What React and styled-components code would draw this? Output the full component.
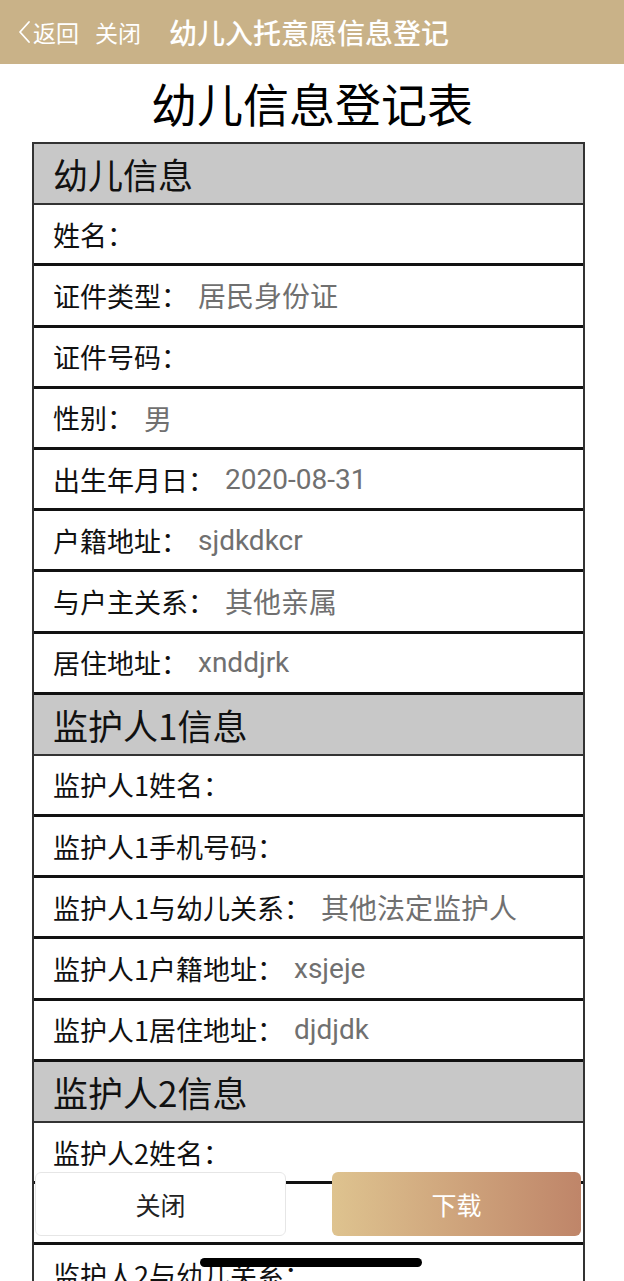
import React from "react";
import styled, { createGlobalStyle } from "styled-components";

const GlobalStyle = createGlobalStyle`
  body {
    margin: 0;
    background: #fff;
    font-family: "Noto Sans CJK SC", "Noto Sans", sans-serif;
    color: #111;
  }
`;

const NavBar = styled.div`
  height: 64px;
  background-color: #c9b288;
  display: flex;
  align-items: center;
  padding-left: 17px;
  color: #fff;
`;
const NavLink = styled.span`
  display: flex;
  align-items: center;
  font-size: 23px;
  margin-right: ${props => props.gap || 0}px;
`;
const NavTitle = styled.span`
  font-size: 28px;
  font-weight: 500;
`;

const PageTitle = styled.h1`
  margin: 0;
  height: 76px;
  padding-bottom: 2px;
  display: flex;
  align-items: center;
  justify-content: center;
  font-size: 46px;
  font-weight: 400;
  color: #000;
`;

const Table = styled.div`
  margin: 0 39px 0 32px;
  border-top: 2px solid #333;
  border-left: 2px solid #333;
  border-right: 2px solid #333;
  padding-bottom: 120px;
`;
const SectionHead = styled.div`
  box-sizing: border-box;
  height: 61.2px;
  background: #c8c8c8;
  border-bottom: 2px solid #333;
  display: flex;
  align-items: center;
  padding-left: 19px;
  font-size: 35px;
  color: #111;
`;
const Row = styled.div`
  box-sizing: border-box;
  height: 61.2px;
  border-bottom: 3px solid #111;
  display: flex;
  align-items: center;
  padding-left: 19px;
  font-size: 27px;
`;
const Label = styled.span`
  color: #111;
`;
const Value = styled.span`
  color: #707070;
  margin-left: 10px;
  font-family: Roboto, "Noto Sans CJK SC", sans-serif;
  font-size: 28px;
`;

const Footer = styled.div`
  position: fixed;
  left: 0;
  right: 0;
  bottom: 45px;
  display: flex;
  gap: 46px;
  padding: 0 43px 0 35px;
`;
const Button = styled.button`
  flex: 1;
  height: 64px;
  border-radius: 6px;
  font-family: inherit;
  font-size: 25px;
  border: ${props => (props.primary ? "none" : "1px solid #e6e6e6")};
  color: ${props => (props.primary ? "#fff" : "#222")};
  background: ${props =>
    props.primary ? "linear-gradient(90deg, #dec38f, #bf8569)" : "#fff"};
`;
const HomeBar = styled.div`
  position: fixed;
  left: 200px;
  bottom: 14px;
  width: 222px;
  height: 9px;
  border-radius: 5px;
  background: #000;
`;

const sections = [
  {
    title: "幼儿信息",
    rows: [
      ["姓名", ""],
      ["证件类型", "居民身份证"],
      ["证件号码", ""],
      ["性别", "男"],
      ["出生年月日", "2020-08-31"],
      ["户籍地址", "sjdkdkcr"],
      ["与户主关系", "其他亲属"],
      ["居住地址", "xnddjrk"],
    ],
  },
  {
    title: "监护人1信息",
    rows: [
      ["监护人1姓名", ""],
      ["监护人1手机号码", ""],
      ["监护人1与幼儿关系", "其他法定监护人"],
      ["监护人1户籍地址", "xsjeje"],
      ["监护人1居住地址", "djdjdk"],
    ],
  },
  {
    title: "监护人2信息",
    rows: [
      ["监护人2姓名", ""],
      ["监护人2手机号码", ""],
      ["监护人2与幼儿关系", ""],
      ["监护人2户籍地址", ""],
      ["监护人2居住地址", ""],
    ],
  },
];

function Chevron() {
  return (
    <svg width="16" height="26" viewBox="0 0 16 26" fill="none">
      <path d="M12 3 L3 13 L12 23" stroke="#fff" strokeWidth="1.8" strokeLinecap="round" strokeLinejoin="round" />
    </svg>
  );
}

export default function App() {
  return (
    <>
      <GlobalStyle />
      <NavBar>
        <NavLink gap={16}><Chevron />返回</NavLink>
        <NavLink gap={28}>关闭</NavLink>
        <NavTitle>幼儿入托意愿信息登记</NavTitle>
      </NavBar>
      <PageTitle>幼儿信息登记表</PageTitle>
      <Table>
        {sections.map(section => (
          <React.Fragment key={section.title}>
            <SectionHead>{section.title}</SectionHead>
            {section.rows.map(([label, value]) => (
              <Row key={label}>
                <Label>{label}：</Label>
                <Value>{value}</Value>
              </Row>
            ))}
          </React.Fragment>
        ))}
      </Table>
      <Footer>
        <Button>关闭</Button>
        <Button primary>下载</Button>
      </Footer>
      <HomeBar />
    </>
  );
}
